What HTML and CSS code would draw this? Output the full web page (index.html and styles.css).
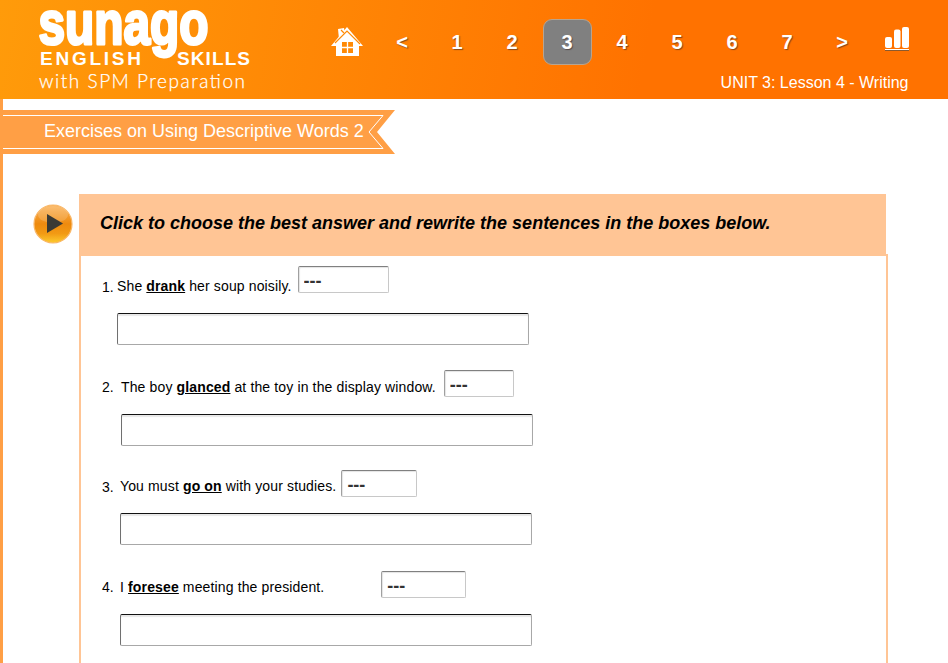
FILE: index.html
```html
<!doctype html>
<html lang="en">
  <head>
    <meta charset="UTF-8" />
    <meta name="viewport" content="width=device-width, initial-scale=1.0" />
    <title>Sunago English Skills - Unit 3 Lesson 4</title>
    <link rel="stylesheet" href="styles.css">
  </head>
  <body>
    <header class="topbar">
      <svg class="logo" width="260" height="99" viewBox="0 0 260 99">
        <text class="logo-word" x="38.5" y="44" textLength="170" lengthAdjust="spacingAndGlyphs">sunago</text>
        <text class="logo-sub" x="40" y="65" textLength="101" lengthAdjust="spacing">ENGLISH</text>
        <text class="logo-sub" x="177" y="65" textLength="73" lengthAdjust="spacing">SKILLS</text>
        <text class="logo-line" x="39" y="88" textLength="206" lengthAdjust="spacing">with SPM Preparation</text>
      </svg>
      <div class="topbar-right">
        <nav class="pager">
          <a class="pager-item">
            <svg width="36" height="34" viewBox="0 0 36 34">
              <path class="home-fill" d="M2 21 L18 2 L34 21 L30 21 L30 31 L7 31 L7 21 Z" />
              <path class="home-fill" d="M9 4 L15 3 L16 9 L10 14 Z" />
              <path class="home-line" d="M6 18 L18 6 L31 19" />
              <path class="home-line" d="M12 5 L15 8" />
              <rect class="home-window" x="13" y="17" width="11" height="11" />
              <path class="home-cross" d="M18.5 17 V28 M13 22.5 H24" />
            </svg>
          </a>
          <a class="pager-item">&lt;</a>
          <a class="pager-item">1</a>
          <a class="pager-item">2</a>
          <a class="pager-item active">3</a>
          <a class="pager-item">4</a>
          <a class="pager-item">5</a>
          <a class="pager-item">6</a>
          <a class="pager-item">7</a>
          <a class="pager-item">&gt;</a>
          <a class="pager-item">
            <svg class="bars" width="26" height="26" viewBox="0 0 26 26">
              <rect class="bar" x="1" y="10" width="7" height="11" rx="2" />
              <rect class="bar" x="10" y="2.5" width="6.5" height="18.5" rx="2" />
              <rect class="bar" x="18" y="0" width="7" height="21" rx="2" />
              <rect class="bar" x="1" y="22" width="24" height="1" />
              <rect class="bar-shadow" x="1" y="23" width="24" height="1" />
            </svg>
          </a>
        </nav>
        <div class="lesson">UNIT 3: Lesson 4 - Writing</div>
      </div>
    </header>

    <main class="content">
      <div class="ribbon">
        <svg class="ribbon-bg" width="395" height="44" viewBox="0 0 395 44">
          <polygon class="ribbon-fill" points="0,0 395,0 377,22 395,44 0,44" />
          <polyline class="ribbon-line" points="3,5.5 383,5.5 369,22 383,38.5 3,38.5" />
        </svg>
        <span class="ribbon-text">Exercises on Using Descriptive Words 2</span>
      </div>

      <section class="exercise">
        <svg class="play" width="40" height="40" viewBox="0 0 40 40">
          <defs>
            <linearGradient id="playFill" x1="0" y1="0" x2="0" y2="1">
              <stop offset="0" stop-color="#fbb35a" />
              <stop offset="0.5" stop-color="#ee8a0e" />
              <stop offset="0.75" stop-color="#f29a14" />
              <stop offset="1" stop-color="#fdcb2e" />
            </linearGradient>
          </defs>
          <circle cx="20" cy="20" r="19" fill="url(#playFill)" stroke="#f9b768" stroke-width="1.2" />
          <ellipse cx="20" cy="10.5" rx="15" ry="8.5" fill="white" opacity="0.16" />
          <polygon points="14,10 14,29 30,19.5" fill="#3a3a35" />
        </svg>
        <div class="exercise-body">
          <h2 class="instruction">Click to choose the best answer and rewrite the sentences in the boxes below.</h2>
          <div class="panel">
            <div class="question q1">
              <div class="question-line">
                <span class="num">1.</span>
                <span class="sentence">She <b>drank</b> her soup noisily.</span>
                <select class="pick"><option>---</option></select>
              </div>
              <input class="answer" type="text" />
            </div>
            <div class="question q2">
              <div class="question-line">
                <span class="num">2.</span>
                <span class="sentence">The boy <b>glanced</b> at the toy in the display window.</span>
                <select class="pick"><option>---</option></select>
              </div>
              <input class="answer" type="text" />
            </div>
            <div class="question q3">
              <div class="question-line">
                <span class="num">3.</span>
                <span class="sentence">You must <b>go on</b> with your studies.</span>
                <select class="pick"><option>---</option></select>
              </div>
              <input class="answer" type="text" />
            </div>
            <div class="question q4">
              <div class="question-line">
                <span class="num">4.</span>
                <span class="sentence">I <b>foresee</b> meeting the president.</span>
                <select class="pick"><option>---</option></select>
              </div>
              <input class="answer" type="text" />
            </div>
          </div>
        </div>
      </section>
    </main>
  </body>
</html>
```

FILE: styles.css
```css
body {
  margin: 0;
  background: white;
  color: black;
  font-family: "Liberation Sans", Arial, sans-serif;
}

/* top orange bar */
.topbar {
  height: 99px;
  display: flex;
  justify-content: space-between;
  background: linear-gradient(100deg, #ff9b0a 0%, #ff7200 68%, #ff7200 100%);
  color: white;
}
.logo {
  display: block;
  flex: none;
}
.logo text {
  fill: white;
}
.logo-word {
  font-family: "Liberation Sans", Arial, sans-serif;
  font-size: 62px;
  font-weight: bold;
  stroke: white;
  stroke-width: 3px;
  stroke-linejoin: round;
}
.logo-sub {
  font-family: "Liberation Sans", Arial, sans-serif;
  font-size: 19px;
  font-weight: bold;
}
.logo-line {
  font-family: Lato, sans-serif;
  font-size: 19px;
  font-weight: 300;
  stroke: white;
  stroke-width: 0.25px;
}
.topbar-right {
  display: flex;
  flex-direction: column;
  align-items: flex-end;
  padding: 19px 23.5px 0 0;
}
.pager {
  display: flex;
}
.pager-item {
  width: 55px;
  height: 46px;
  display: flex;
  align-items: center;
  justify-content: center;
  font-size: 20px;
  font-weight: bold;
  text-shadow: 1px 1px 1px rgba(60, 40, 40, 0.6);
}
.pager-item.active {
  width: 49px;
  margin: 0 3px;
  box-sizing: border-box;
  background: #808080;
  border: 1px solid #b8a48f;
  border-radius: 9px;
}
.home-fill {
  fill: white;
}
.home-line {
  fill: none;
  stroke: #ff8a05;
  stroke-width: 1.2;
}
.home-window {
  fill: #ff8a05;
}
.home-cross {
  fill: none;
  stroke: white;
  stroke-width: 1.3;
}
.bars {
  margin-bottom: 4px;
}
.bar {
  fill: white;
}
.bar-shadow {
  fill: #8a5a30;
}
.lesson {
  margin: 9px 16px 0 0;
  font-size: 16px;
  line-height: 18px;
}

/* page body */
.content {
  border-left: 3px solid #ff9f45;
  padding-top: 11px;
}
.ribbon {
  position: relative;
  width: 395px;
  height: 44px;
  margin-left: -3px;
  color: white;
  font-size: 18px;
  line-height: 42px;
}
.ribbon-bg {
  position: absolute;
  top: 0;
  left: 0;
}
.ribbon-fill {
  fill: #ff9f45;
}
.ribbon-line {
  fill: none;
  stroke: white;
  stroke-width: 1;
}
.ribbon-text {
  position: relative;
  padding-left: 44px;
}

.exercise {
  display: flex;
  margin-top: 40px;
  padding-left: 30px;
}
.play {
  flex: none;
  margin: 10px 6px 0 0;
}
.exercise-body {
  width: 809px;
}
.instruction {
  width: 807px;
  height: 62px;
  margin: 0;
  padding: 0 0 4px 21px;
  box-sizing: border-box;
  display: flex;
  align-items: center;
  background: #ffc595;
  font-size: 18px;
  font-style: italic;
  font-weight: bold;
}
.panel {
  margin-top: -2px;
  padding: 10px 0 17px;
  border: 2px solid #ffc595;
  border-bottom: none;
}

.question {
  padding-left: 21px;
  font-size: 14px;
}
.question-line {
  display: flex;
  align-items: flex-end;
}
.num {
  flex: none;
  width: var(--indent);
  margin-bottom: var(--num-lift);
}
.sentence {
  line-height: 16px;
  letter-spacing: 0.135px;
  margin-bottom: var(--lift);
}
.sentence b {
  text-decoration: underline;
}
.pick {
  appearance: none;
  height: 27px;
  margin-left: var(--gap);
  width: var(--pick);
  padding: 2px 0 0 5px;
  box-sizing: border-box;
  background: white;
  border: 1px solid #c8c8c8;
  border-top-color: #808080;
  border-left-color: #a0a0a0;
  border-radius: 2px;
  box-shadow: inset 1px 1px 1px #e4e4e4;
  color: #333;
  font-family: "Liberation Sans", Arial, sans-serif;
  font-size: 18px;
  font-weight: bold;
}
.answer {
  display: block;
  width: 412px;
  height: 32px;
  margin: var(--answer-top) 0 0 var(--indent);
  padding: 0;
  box-sizing: border-box;
  background: white;
  border: 1px solid #a8a8a8;
  border-top-color: #111;
  border-left-color: #707070;
  border-radius: 2px;
  box-shadow: inset 0 2px 1px #e8e8e8;
}
.q1 {
  --indent: 15px;
  --gap: 6px;
  --pick: 91px;
  --answer-top: 20px;
  --lift: -1px;
  --num-lift: -2px;
}
.q2 {
  --indent: 19px;
  --gap: 8px;
  --pick: 70px;
  --answer-top: 17px;
  --lift: 2px;
  --num-lift: 2px;
  margin-top: 25px;
}
.q3 {
  --indent: 18px;
  --gap: 5px;
  --pick: 76px;
  --answer-top: 16px;
  --lift: 3px;
  --num-lift: 2px;
  margin-top: 24px;
}
.q4 {
  --indent: 18px;
  --gap: 57px;
  --pick: 85px;
  --answer-top: 16px;
  --lift: 3px;
  --num-lift: 3px;
  margin-top: 26px;
}
```
